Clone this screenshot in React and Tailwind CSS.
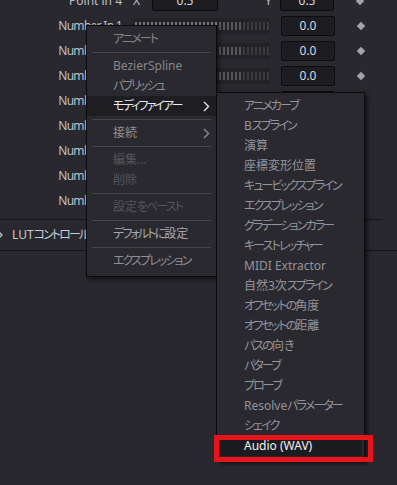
import React from "react";

const font = "font-['Noto_Sans','Noto_Sans_CJK_JP',sans-serif] [font-feature-settings:'palt']";

function J({ t }) {
  const parts = t.split(/([\u3040-\u30ff]+)/).filter(Boolean);
  return (
    <span className="leading-none whitespace-nowrap">
      {parts.map((p, i) =>
        /[\u3040-\u30ff]/.test(p) ? (
          <span key={i} className="tracking-[-1.9px]">{p}</span>
        ) : (
          <span key={i}>{p}</span>
        )
      )}
    </span>
  );
}

function Diamond() {
  return <div className="ml-[22px] w-[8px] h-[8px] flex items-center justify-center"><div className="w-[6px] h-[6px] rotate-45 bg-[#a3a3a8]" /></div>;
}

function Slider() {
  const ticks = Array.from({ length: 34 });
  return (
    <div className="ml-[11px] w-[137px] h-[16px] bg-[#232227] flex items-center gap-[2px] pl-[2px] overflow-hidden">
      {ticks.map((_, i) => (
        <div key={i} className={"w-[2px] h-[8px] shrink-0 " + (i < 21 ? "bg-[#77777c]" : i < 27 ? "bg-[#55555a]" : "bg-[#3a3a3f]")} />
      ))}
    </div>
  );
}

function Box({ w, v }) {
  return (
    <div className={"h-[20px] rounded-[2px] bg-[#1d1c21] border border-[#0c0c0e] flex items-center justify-center text-[12px] text-[#d6dae2] " + w}>{v}</div>
  );
}

function Chevron({ c }) {
  return (
    <svg width="7" height="11" viewBox="0 0 7 11" className="absolute right-[6px] top-[5px]">
      <path d="M1 1 L5.5 5.5 L1 10" stroke={c} strokeWidth="1.4" fill="none" />
    </svg>
  );
}

function Sep() {
  return <div className="h-[7px] flex items-center px-[5px]"><div className="h-px w-full bg-[#46454c]" /></div>;
}

function Item({ t, c = "text-[#8f8f95]", hl, chev, chevC }) {
  return (
    <div className={"relative h-[20px] flex items-center pl-[26px] " + c + (hl ? " bg-[#1e1d22]" : "")}>
      <J t={t} />
      {chev && <Chevron c={chevC} />}
    </div>
  );
}

export default function App() {
  const sub = ["アニメカーブ", "Bスプライン", "演算", "座標変形位置", "キュービックスプライン", "エクスプレッション", "グラデーションカラー", "キーストレッチャー", "MIDI Extractor", "自然3次スプライン", "オフセットの角度", "オフセットの距離", "パスの向き", "パターブ", "プローブ", "Resolveパラメーター", "シェイク"];
  return (
    <div className={"relative w-[397px] h-[485px] overflow-hidden bg-[#29282e] text-[12px] " + font}>
      <div className="flex flex-col mt-[-12px]">
        <div className="h-[25px] flex items-center">
          <div className="w-[122px] text-right text-[#bcc0c8]">Point in 4</div>
          <div className="ml-[11px] w-[10px] text-[#bcc0c8]">X</div>
          <div className="ml-[9px]"><Box w="w-[66px]" v="0.5" /></div>
          <div className="ml-[47px] w-[10px] text-[#bcc0c8]">Y</div>
          <div className="ml-[5px]"><Box w="w-[54px]" v="0.5" /></div>
          <Diamond />
        </div>
        {[1, 2, 3, 4, 5, 6, 7, 8].map((n) => (
          <div key={n} className="h-[25px] flex items-center">
            <div className="w-[122px] text-right text-[#bcc0c8] tracking-[-0.7px]">Number In {n}</div>
            <Slider />
            <div className="ml-[11px]"><Box w="w-[54px]" v="0.0" /></div>
            <Diamond />
          </div>
        ))}
        <div className="mt-[6px] h-px w-[381px] bg-[#141417]" />
        <div className="h-[30px] flex items-center text-[#c6cad2]">
          <svg width="5" height="8" viewBox="0 0 5 8" className="ml-[-1px]"><path d="M0 1 L3 4 L0 7" stroke="#bcc0c8" strokeWidth="1.3" fill="none" /></svg>
          <span className="ml-[8px]"><J t="LUTコントロール" /></span>
        </div>
        <div className="h-px w-full bg-[#141417]" />
      </div>

      {/* main context menu */}
      <div className="absolute left-[86px] top-[25px] w-[131px] bg-[#2a2930] border border-[#0b0b0d] pt-[3px] pb-[5px] shadow-[2px_3px_4px_rgba(0,0,0,0.45)]">
        <Item t="アニメート" c="text-[#85858b]" />
        <Sep />
        <Item t="BezierSpline" c="text-[#85858b]" />
        <Item t="パブリッシュ" c="text-[#8f8f95]" />
        <Item t="モディファイアー" c="text-[#ececef]" hl chev chevC="#e6e6e8" />
        <Sep />
        <Item t="接続" c="text-[#8f8f95]" chev chevC="#8a8a90" />
        <Sep />
        <Item t="編集..." c="text-[#55545a]" />
        <Item t="削除" c="text-[#55545a]" />
        <Sep />
        <Item t="設定をペースト" c="text-[#55545a]" />
        <Sep />
        <Item t="デフォルトに設定" c="text-[#a6a6ab]" />
        <Sep />
        <Item t="エクスプレッション" c="text-[#8f8f95]" />
      </div>

      {/* submenu */}
      <div className="absolute left-[216px] top-[92px] w-[149px] bg-[#2a2930] border border-[#0b0b0d] pt-[3px] pb-[4px] shadow-[3px_3px_4px_rgba(0,0,0,0.5)]">
        {sub.map((t) => (
          <div key={t} className="h-[20px] flex items-center pl-[27px] text-[#94949a]"><J t={t} /></div>
        ))}
        <div className="h-[20px] flex items-center pl-[25px] text-[#f2f2f4] bg-[#1c1b20] mx-[2px]"><J t="Audio (WAV)" /></div>
      </div>

      <div className="absolute left-[214px] top-[435px] w-[159px] h-[27px] border-[5px] border-[#e8141c]" />
    </div>
  );
}
